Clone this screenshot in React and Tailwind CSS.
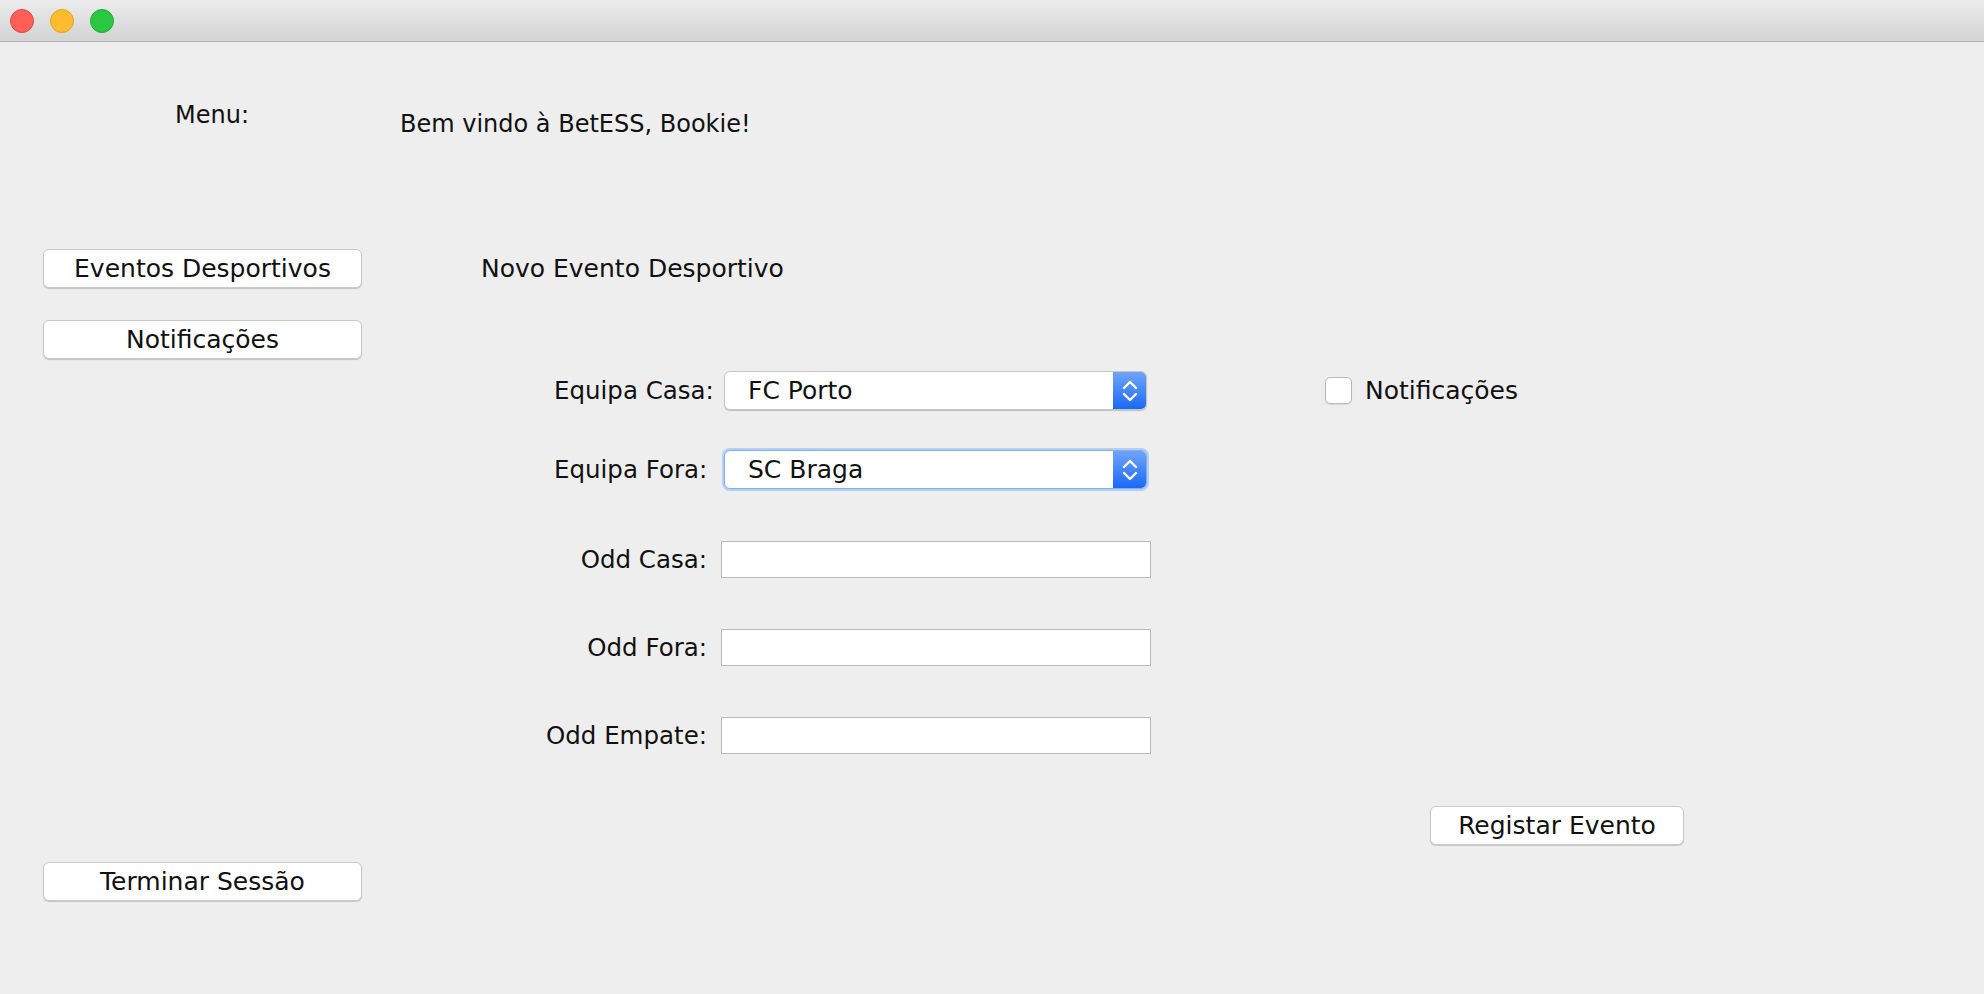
function Btn({ className = "", children }) {
  return (
    <div
      className={
        "h-[39px] flex items-center justify-center bg-white border border-[#c9c9c9] rounded-[6px] shadow-[0_1px_1px_rgba(0,0,0,0.18)] text-[25px] leading-[28px] text-[#111] whitespace-nowrap " +
        className
      }
    >
      {children}
    </div>
  );
}

function Chevrons() {
  return (
    <svg width="18" height="28" viewBox="0 0 18 28" fill="none" stroke="white" strokeWidth="2.4" strokeLinecap="round" strokeLinejoin="round">
      <polyline points="3,11 9,5 15,11" />
      <polyline points="3,17 9,23 15,17" />
    </svg>
  );
}

function Combo({ value, focused }) {
  return (
    <div
      className={
        "w-[423px] h-[39px] flex bg-white rounded-[6px] border " +
        (focused
          ? "border-[#86aee8] ring-[2px] ring-[#b3cff5]"
          : "border-[#c6c6c6] shadow-[0_1px_1px_rgba(0,0,0,0.2)]")
      }
    >
      <div className="flex-1 flex items-center pl-[23px] text-[25px] leading-[28px] text-[#111] whitespace-nowrap">{value}</div>
      <div className="w-[33px] h-full flex items-center justify-center rounded-r-[5px] bg-gradient-to-b from-[#6fa3f7] to-[#1668f8]">
        <Chevrons />
      </div>
    </div>
  );
}

function Field() {
  return <div className="w-[430px] h-[37px] bg-white border border-[#b9b9b9]" />;
}

function OddRow({ label, className = "" }) {
  return (
    <div className={"flex items-center ml-[145px] " + className}>
      <div className="w-[200px] flex justify-end text-[24.5px] leading-[28px] text-[#111] whitespace-nowrap">{label}</div>
      <div className="ml-[14px]">
        <Field />
      </div>
    </div>
  );
}

export default function App() {
  return (
    <div className="w-[1984px] h-[994px] bg-[#eeeeee] flex flex-col overflow-hidden font-['DejaVu_Sans',sans-serif] text-[#111]">
      <div className="h-[42px] shrink-0 bg-gradient-to-b from-[#ececec] to-[#d3d3d3] border-b border-[#b3b3b3] flex items-center pl-[10px] gap-[16px]">
        <span className="w-[24px] h-[24px] rounded-full bg-[#fe5f57] border border-[#e2463f]" />
        <span className="w-[24px] h-[24px] rounded-full bg-[#febc2e] border border-[#dfa123]" />
        <span className="w-[24px] h-[24px] rounded-full bg-[#2ac840] border border-[#1dad2b]" />
      </div>
      <div className="flex flex-1">
        <div className="ml-[43px] w-[319px] shrink-0 flex flex-col">
          <div className="mt-[59px] ml-[132px] text-[24px] leading-[28px]">Menu:</div>
          <Btn className="mt-[120px]">Eventos Desportivos</Btn>
          <Btn className="mt-[32px]">Notificações</Btn>
          <Btn className="mt-[503px]">Terminar Sessão</Btn>
        </div>
        <div className="flex-1 flex flex-col items-start">
          <div className="mt-[68px] ml-[38px] text-[24px] leading-[28px] whitespace-nowrap">Bem vindo à BetESS, Bookie!</div>
          <div className="mt-[117px] ml-[119px] text-[25px] leading-[28px] whitespace-nowrap">Novo Evento Desportivo</div>
          <div className="mt-[88px] ml-[192px] flex items-center">
            <div className="w-[170px] text-[24.5px] leading-[28px] whitespace-nowrap">Equipa Casa:</div>
            <Combo value="FC Porto" />
            <div className="ml-[178px] w-[27px] h-[27px] bg-white border border-[#b8b8b8] rounded-[5px] shadow-[0_1px_1px_rgba(0,0,0,0.08)]" />
            <div className="ml-[13px] text-[25px] leading-[28px] whitespace-nowrap">Notificações</div>
          </div>
          <div className="mt-[40px] ml-[192px] flex items-center">
            <div className="w-[170px] text-[24.5px] leading-[28px] whitespace-nowrap">Equipa Fora:</div>
            <Combo value="SC Braga" focused />
          </div>
          <OddRow label="Odd Casa:" className="mt-[52px]" />
          <OddRow label="Odd Fora:" className="mt-[51px]" />
          <OddRow label="Odd Empate:" className="mt-[51px]" />
          <Btn className="mt-[52px] ml-[1068px] w-[254px] h-[38px]">Registar Evento</Btn>
        </div>
      </div>
    </div>
  );
}
